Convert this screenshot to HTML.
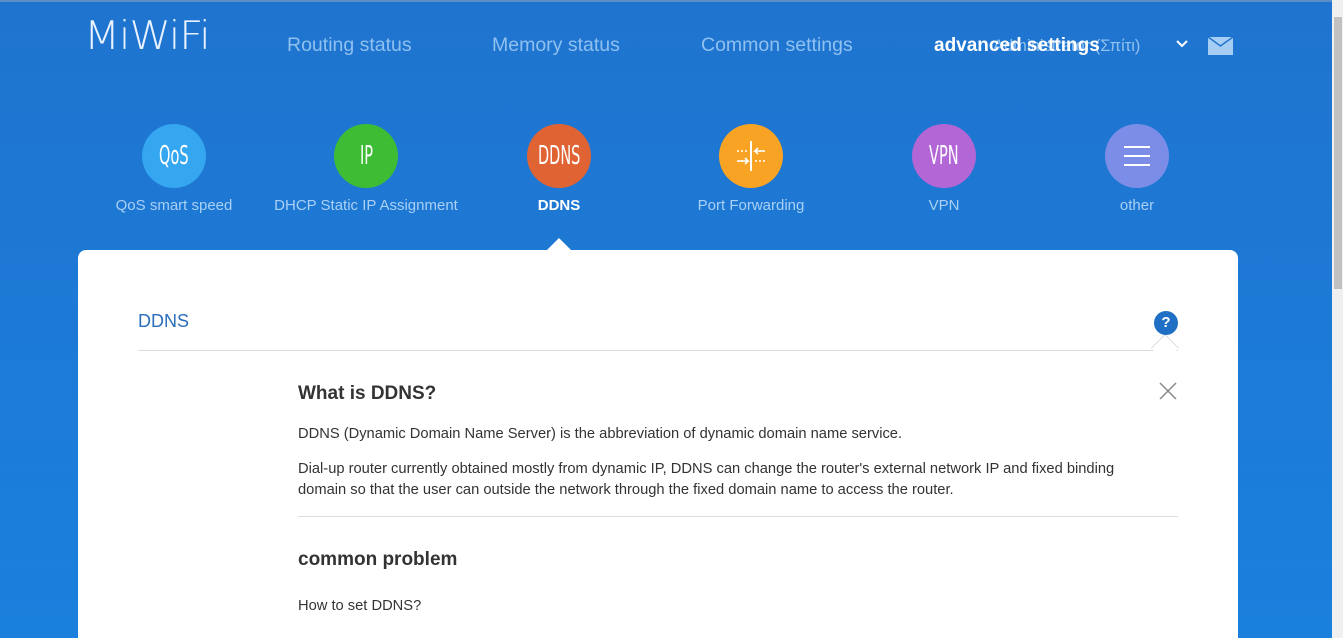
<!DOCTYPE html>
<html><head><meta charset="utf-8"><style>
*{margin:0;padding:0;box-sizing:border-box}
html,body{width:1343px;height:638px;overflow:hidden}
body{background:#1e78d4;font-family:"Liberation Sans","DejaVu Sans",sans-serif;position:relative}
.bg{position:absolute;left:0;top:0;width:1332px;height:638px;background:linear-gradient(#1f74cf,#1a80dd)}
.top{position:absolute;top:0;left:0;width:1332px;height:2px;background:#5a8fc8}
.logo{position:absolute;left:84px;top:14px;font-size:39px;color:#e8f2ff;font-family:"DejaVu Sans","Liberation Sans",sans-serif;font-weight:200;letter-spacing:-1px;transform:scaleX(1.07);transform-origin:left}
.nav{position:absolute;top:34px;font-size:19.5px;color:#8fc0f0;white-space:nowrap}
.sb{position:absolute;left:1332px;top:0;width:11px;height:638px;background:#f0f0f0}
.sb i{position:absolute;left:2px;top:17px;width:8px;height:272px;background:#c1c1c1}
.ic{position:absolute;top:124px;width:64px;height:64px;border-radius:50%;color:#fff;font-size:26px;display:flex;align-items:center;justify-content:center;font-family:"DejaVu Sans Condensed","Liberation Sans Narrow",sans-serif;transform:translateX(-50%)}
.ic span{display:inline-block;transform:scaleX(.62)}
.lb{position:absolute;top:197px;font-size:15px;color:#a9d0f5;transform:translateX(-50%);white-space:nowrap}
.card{position:absolute;left:78px;top:250px;width:1160px;height:388px;background:#fff;border-radius:8px 8px 0 0}
.arrow{position:absolute;left:547px;top:238px;border:12px solid transparent;border-bottom-color:#fff;border-top:0}
h2{position:absolute;left:298px;font-size:19px;font-weight:bold;color:#333}
p{position:absolute;left:298px;font-size:14.7px;color:#333;line-height:21px;width:862px}
</style></head><body>
<div class="bg"></div><div class="top"></div>
<div class="logo">MiWiFi</div>
<div class="nav" style="left:287px">Routing status</div>
<div class="nav" style="left:492px">Memory status</div>
<div class="nav" style="left:701px">Common settings</div>
<div class="nav" style="left:993px;color:#8fc0f0;font-size:16.5px;top:37px">Administrator (Σπίτι)</div>
<div class="nav" style="left:934px;color:#fff;font-weight:bold;font-size:19px;top:35px">advanced settings</div>
<svg style="position:absolute;left:1175px;top:39px" width="14" height="10"><path d="M2 2l5 5 5-5" stroke="#fff" stroke-width="2" fill="none"/></svg>
<svg style="position:absolute;left:1208px;top:37px" width="25" height="18"><rect width="25" height="18" fill="#a6cdf3"/><path d="M0 0l12.5 9L25 0" stroke="#1f74cf" stroke-width="1.5" fill="none"/></svg>
<div class="ic" style="left:174px;background:#35a6f0"><span>QoS</span></div>
<div class="ic" style="left:366px;background:#3dbd33"><span>IP</span></div>
<div class="ic" style="left:559px;background:#e06333"><span>DDNS</span></div>
<div class="ic" style="left:751px;background:#f9a324"><svg width="34" height="34" viewBox="0 0 34 34"><path d="M17 2v30" stroke="#fff" stroke-width="2"/><path d="M3 12h10M21 12h10M3 22h10M21 22h10" stroke="#fff" stroke-dasharray="2 2" stroke-width="1.5"/><path d="M30 12h-9l3-3M21 12l3 3M4 22h10l-3-3M14 22l-3 3" stroke="#fff" stroke-width="1.6" fill="none"/></svg></div>
<div class="ic" style="left:944px;background:#b366d6"><span>VPN</span></div>
<div class="ic" style="left:1137px;background:#7b8de6"><svg width="26" height="22"><path d="M0 2h26M0 11h26M0 20h26" stroke="#fff" stroke-width="2"/></svg></div>
<div class="lb" style="left:174px">QoS smart speed</div>
<div class="lb" style="left:366px">DHCP Static IP Assignment</div>
<div class="lb" style="left:559px;color:#fff;font-weight:bold">DDNS</div>
<div class="lb" style="left:751px">Port Forwarding</div>
<div class="lb" style="left:944px">VPN</div>
<div class="lb" style="left:1137px">other</div>
<div class="arrow"></div>
<div class="card"></div>
<div style="position:absolute;left:138px;top:311px;font-size:18px;color:#2a6ebb">DDNS</div>
<div style="position:absolute;left:138px;top:350px;width:1040px;height:1px;background:#ddd"></div>
<div style="position:absolute;left:1155px;top:338px;width:20px;height:20px;background:#fff;border-left:1px solid #ddd;border-top:1px solid #ddd;transform:rotate(45deg)"></div>
<div style="position:absolute;left:1154px;top:311px;width:24px;height:24px;border-radius:50%;background:#1f6fc4;color:#fff;font-weight:bold;font-size:15px;text-align:center;line-height:24px">?</div>
<svg style="position:absolute;left:1159px;top:382px" width="18" height="18"><path d="M1 1l16 16M17 1L1 17" stroke="#888" stroke-width="1.5"/></svg>
<h2 style="top:383px">What is DDNS?</h2>
<p style="top:424px">DDNS (Dynamic Domain Name Server) is the abbreviation of dynamic domain name service.</p>
<p style="top:459px">Dial-up router currently obtained mostly from dynamic IP, DDNS can change the router's external network IP and fixed binding domain so that the user can outside the network through the fixed domain name to access the router.</p>
<div style="position:absolute;left:298px;top:516px;width:880px;height:1px;background:#ddd"></div>
<h2 style="top:549px">common problem</h2>
<p style="top:596px">How to set DDNS?</p>
<div class="sb"><i></i></div>
</body></html>
